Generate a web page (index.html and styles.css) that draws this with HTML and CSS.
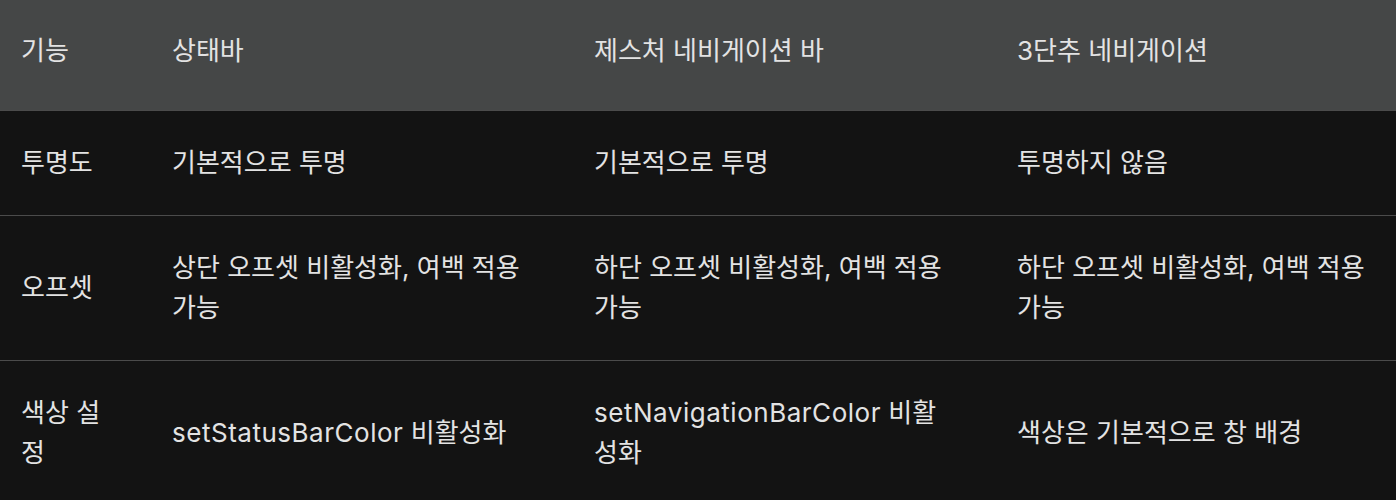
FILE: index.html
```html
<!DOCTYPE html>
<html lang="ko">
<head>
<meta charset="utf-8">
<link rel="stylesheet" href="styles.css">
</head>
<body>
<div class="table">
  <div class="row head">
    <div class="cell c1">기능</div>
    <div class="cell c2">상태바</div>
    <div class="cell c3">제스처 네비게이션 바</div>
    <div class="cell c4">3단추 네비게이션</div>
  </div>
  <div class="row">
    <div class="cell c1">투명도</div>
    <div class="cell c2">기본적으로 투명</div>
    <div class="cell c3">기본적으로 투명</div>
    <div class="cell c4">투명하지 않음</div>
  </div>
  <div class="row">
    <div class="cell c1">오프셋</div>
    <div class="cell c2">상단 오프셋 비활성화, 여백 적용 가능</div>
    <div class="cell c3">하단 오프셋 비활성화, 여백 적용 가능</div>
    <div class="cell c4">하단 오프셋 비활성화, 여백 적용 가능</div>
  </div>
  <div class="row">
    <div class="cell c1">색상 설정</div>
    <div class="cell c2"><span class="latin">setStatusBarColor</span> 비활성화</div>
    <div class="cell c3"><span class="latin">setNavigationBarColor</span> 비활성화</div>
    <div class="cell c4">색상은 기본적으로 창 배경</div>
  </div>
</div>
</body>
</html>
```

FILE: styles.css
```css
html, body {
  margin: 0;
  padding: 0;
  background: #131313;
}
body {
  font-family: Inter, "Noto Sans CJK KR", sans-serif;
  font-size: 26px;
  line-height: 40px;
  color: #e3e3e3;
}
.table {
  display: flex;
  flex-direction: column;
  width: 1396px;
}
.row {
  display: grid;
  grid-template-columns: 152px 422px 423px 399px;
  align-items: center;
  border-top: 1px solid #4b4b4b;
  background: #131313;
}
.row.head {
  background: #454747;
  border-top: none;
}
.cell {
  padding: 32px 52px 32px 20px;
}
.head .cell {
  padding-top: 31px;
  padding-bottom: 39px;
}
.c1 {
  padding-left: 21px;
  padding-right: 40px;
}
.c4 {
  padding-right: 20px;
}
.latin {
  letter-spacing: 0.02em;
}
```
